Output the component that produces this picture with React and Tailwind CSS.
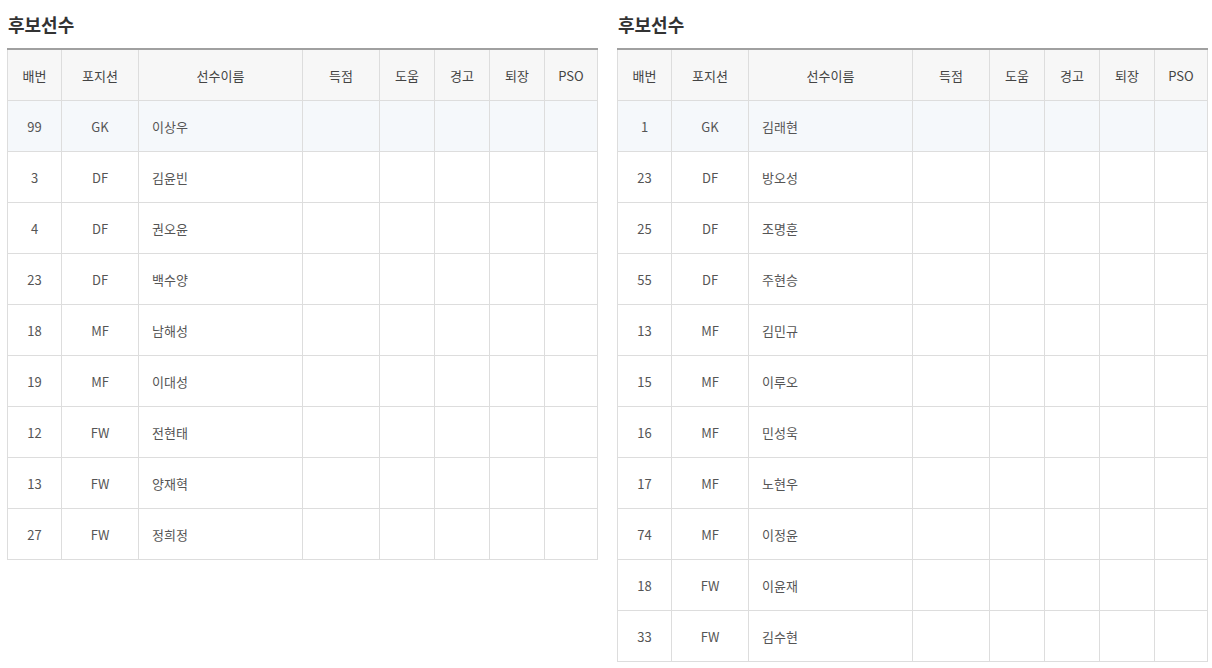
import React from "react";

const left = [
  ["99", "GK", "이상우"],
  ["3", "DF", "김윤빈"],
  ["4", "DF", "권오윤"],
  ["23", "DF", "백수양"],
  ["18", "MF", "남해성"],
  ["19", "MF", "이대성"],
  ["12", "FW", "전현태"],
  ["13", "FW", "양재혁"],
  ["27", "FW", "정희정"],
];
const right = [
  ["1", "GK", "김래현"],
  ["23", "DF", "방오성"],
  ["25", "DF", "조명훈"],
  ["55", "DF", "주현승"],
  ["13", "MF", "김민규"],
  ["15", "MF", "이루오"],
  ["16", "MF", "민성욱"],
  ["17", "MF", "노현우"],
  ["74", "MF", "이정윤"],
  ["18", "FW", "이윤재"],
  ["33", "FW", "김수현"],
];

const heads = ["배번", "포지션", "선수이름", "득점", "도움", "경고", "퇴장", "PSO"];

function Panel({ rows }) {
  return (
    <div className="w-[590px] shrink-0">
      <h3 className="h-[48px] pt-[12px] pl-px text-[18px] leading-[24px] font-bold text-[#333]">후보선수</h3>
      <table className="w-[590px] table-fixed border-collapse border-t-2 border-t-[#a0a0a0] text-[13px] text-[#555]">
        <colgroup>
          <col className="w-[54px]" />
          <col className="w-[77px]" />
          <col className="w-[164px]" />
          <col className="w-[77px]" />
          <col className="w-[55px]" />
          <col className="w-[55px]" />
          <col className="w-[55px]" />
          <col className="w-[53px]" />
        </colgroup>
        <thead>
          <tr className="h-[51px] bg-[#f7f7f7]">
            {heads.map((h) => (
              <th key={h} className="border border-[#dddddd] border-t-0 font-normal text-[#444] text-center p-0 pt-px">
                {h}
              </th>
            ))}
          </tr>
        </thead>
        <tbody>
          {rows.map((r, i) => (
            <tr key={i} className={i === 0 ? "h-[51px] bg-[#f5f8fb]" : "h-[51px] bg-white"}>
              <td className="border border-[#dddddd] text-center p-0 pt-[2px]">{r[0]}</td>
              <td className="border border-[#dddddd] text-center p-0 pt-[2px]">{r[1]}</td>
              <td className="border border-[#dddddd] text-left p-0 pl-[13px] pt-[2px]">{r[2]}</td>
              <td className="border border-[#dddddd]"></td>
              <td className="border border-[#dddddd]"></td>
              <td className="border border-[#dddddd]"></td>
              <td className="border border-[#dddddd]"></td>
              <td className="border border-[#dddddd]"></td>
            </tr>
          ))}
        </tbody>
      </table>
    </div>
  );
}

export default function App() {
  return (
    <div
      className="w-[1212px] h-[668px] overflow-hidden bg-white flex gap-[20px] pl-[7px]"
      style={{ fontFamily: '"Noto Sans CJK KR", "Noto Sans", sans-serif' }}
    >
      <Panel rows={left} />
      <Panel rows={right} />
    </div>
  );
}
